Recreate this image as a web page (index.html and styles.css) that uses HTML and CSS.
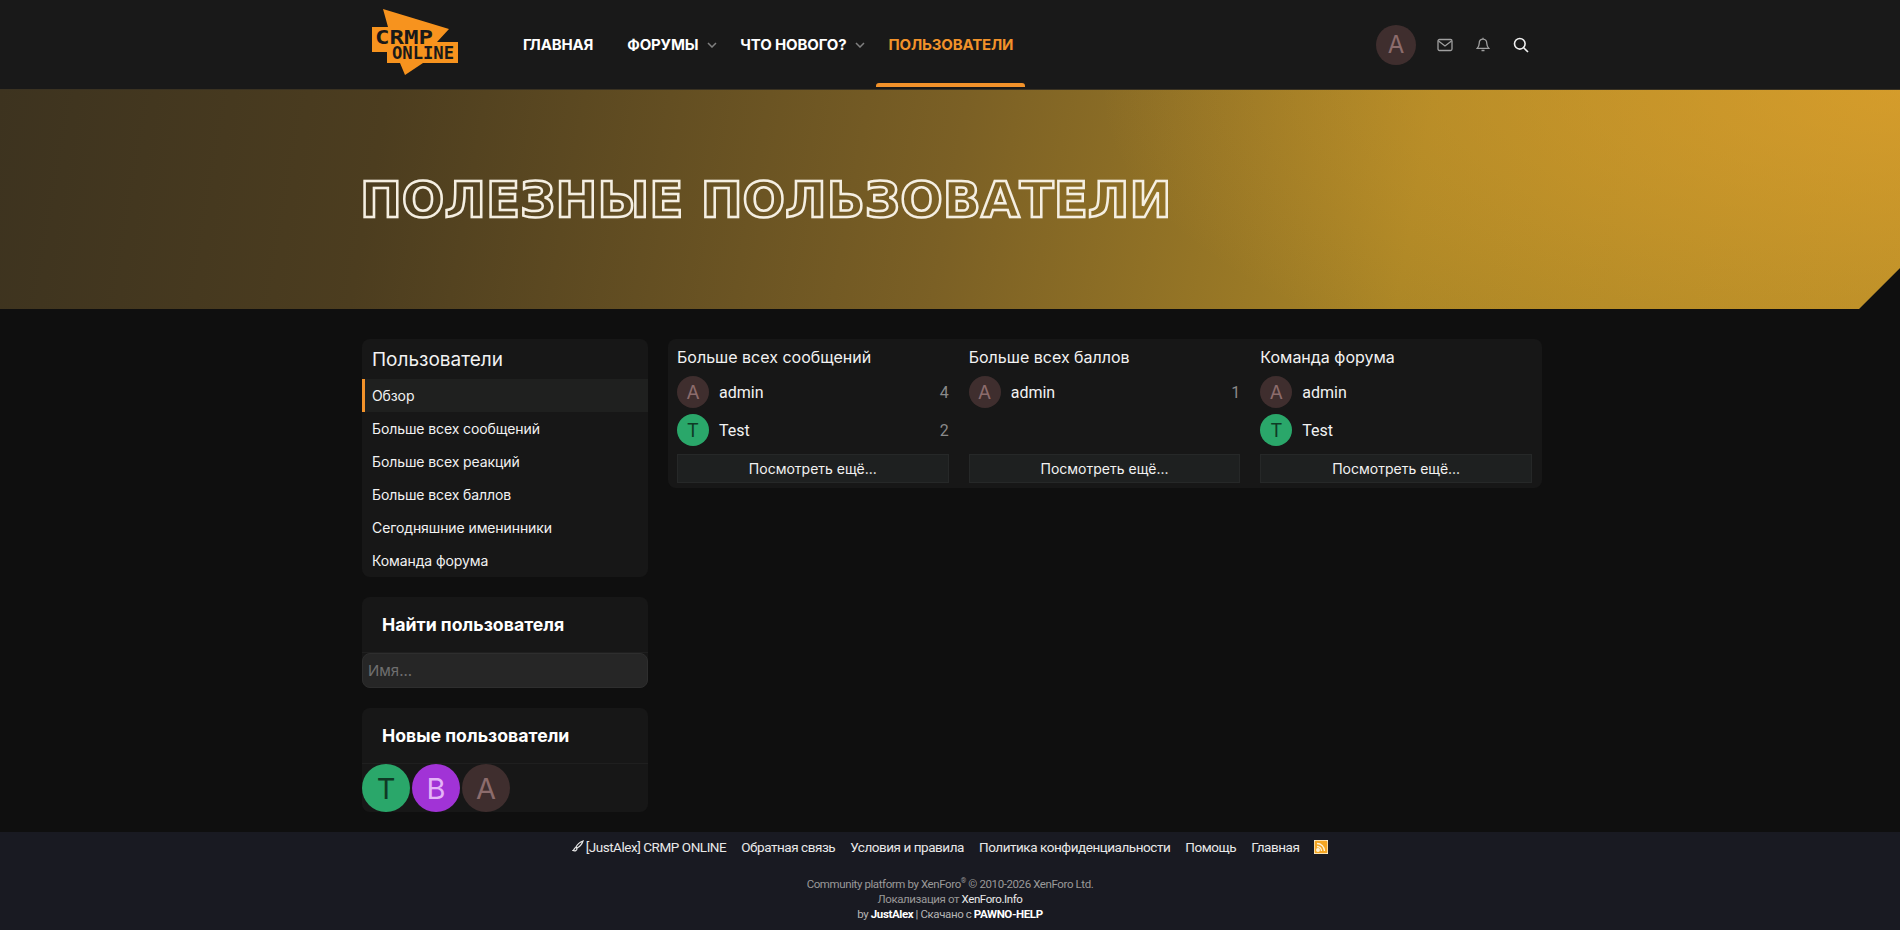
FILE: index.html
```html
<!DOCTYPE html>
<html lang="en">

<head>
    <title>Полезные пользователи</title>
    <link rel="stylesheet" href="styles.css">
</head>

<body>
    <header class="top-bar">
        <div class="wrap top-inner">
            <svg class="logo" viewBox="0 0 90 68" width="90" height="68">
                <polygon fill="#f7931e" points="13,1 79,21 67,34 88,34 88,55 53,55 35,67 30,55 17,55 17,44 2,44 2,19 18,19" />
                <text x="5" y="36" textLength="58" lengthAdjust="spacingAndGlyphs" class="logo-text logo-big">CRMP</text>
                <text x="22" y="51" textLength="62" lengthAdjust="spacingAndGlyphs" class="logo-text logo-small">ONLINE</text>
            </svg>
            <nav class="main-nav">
                <a class="nav-link">ГЛАВНАЯ</a>
                <a class="nav-link nav-drop">ФОРУМЫ<svg class="chev" viewBox="0 0 10 6" width="10" height="6"><path d="M1 1l4 4 4-4" /></svg></a>
                <a class="nav-link nav-drop">ЧТО НОВОГО?<svg class="chev" viewBox="0 0 10 6" width="10" height="6"><path d="M1 1l4 4 4-4" /></svg></a>
                <a class="nav-link nav-active">ПОЛЬЗОВАТЕЛИ</a>
            </nav>
            <div class="top-icons">
                <span class="avatar av-a av-40">A</span>
                <svg class="icon icon-mail" viewBox="0 0 16 14" width="16" height="14"><rect x="1" y="1.500" width="14" height="11" rx="1.500" /><path d="M1.500 3l6.500 5 6.500-5" /></svg>
                <svg class="icon" viewBox="0 0 14 16" width="14" height="16"><path d="M7 2.200c-2.600 0-3.800 2-3.800 4.200 0 2.600-1 3.800-2 5h11.600c-1-1.200-2-2.400-2-5 0-2.200-1.200-4.200-3.800-4.200zM7 .8v1.400M5.500 13.500h3" /></svg>
                <svg class="icon icon-search" viewBox="0 0 16 16" width="16" height="16"><circle cx="6.800" cy="6.800" r="5.300" /><path d="M10.700 10.700l4.300 4.300" /></svg>
            </div>
        </div>
    </header>

    <section class="hero">
        <div class="wrap">
            <h1 class="hero-title">ПОЛЕЗНЫЕ ПОЛЬЗОВАТЕЛИ</h1>
        </div>
    </section>

    <main class="wrap content">
        <aside class="sidebar">
            <div class="block">
                <div class="side-title">Пользователи</div>
                <a class="side-link side-active">Обзор</a>
                <a class="side-link">Больше всех сообщений</a>
                <a class="side-link">Больше всех реакций</a>
                <a class="side-link">Больше всех баллов</a>
                <a class="side-link">Сегодняшние именинники</a>
                <a class="side-link">Команда форума</a>
            </div>

            <div class="block">
                <div class="widget-title">Найти пользователя</div>
                <div class="name-input">Имя...</div>
            </div>

            <div class="block">
                <div class="widget-title">Новые пользователи</div>
                <div class="new-users">
                    <span class="avatar av-t av-48">T</span>
                    <span class="avatar av-b av-48">B</span>
                    <span class="avatar av-a av-48">A</span>
                </div>
            </div>
        </aside>

        <section class="block lists">
            <div class="list-col">
                <div class="list-title">Больше всех сообщений</div>
                <div class="user-row"><span class="avatar av-a av-32">A</span><span class="user-name">admin</span><span class="user-count">4</span></div>
                <div class="user-row"><span class="avatar av-t av-32">T</span><span class="user-name">Test</span><span class="user-count">2</span></div>
                <a class="more-btn">Посмотреть ещё...</a>
            </div>
            <div class="list-col">
                <div class="list-title">Больше всех баллов</div>
                <div class="user-row"><span class="avatar av-a av-32">A</span><span class="user-name">admin</span><span class="user-count">1</span></div>
                <div class="user-row"></div>
                <a class="more-btn">Посмотреть ещё...</a>
            </div>
            <div class="list-col">
                <div class="list-title">Команда форума</div>
                <div class="user-row"><span class="avatar av-a av-32">A</span><span class="user-name">admin</span></div>
                <div class="user-row"><span class="avatar av-t av-32">T</span><span class="user-name">Test</span></div>
                <a class="more-btn">Посмотреть ещё...</a>
            </div>
        </section>
    </main>

    <footer class="page-footer">
        <div class="foot-links">
            <a><svg class="brush" viewBox="0 0 12 12" width="12" height="12"><path d="M11 1C8 2 5 5 4 7l1 1c2-1 5-4 6-7zM3.500 7.500C2 8 2.500 10 1 10.500c2 1 4 0 4-2z" /></svg>[JustAlex] CRMP ONLINE</a>
            <a>Обратная связь</a>
            <a>Условия и правила</a>
            <a>Политика конфиденциальности</a>
            <a>Помощь</a>
            <a>Главная</a>
            <svg class="rss" viewBox="0 0 14 14" width="14" height="14">
                <rect width="14" height="14" rx="2" fill="#f5a623" />
                <circle cx="4" cy="10" r="1.300" fill="#fff3d6" />
                <path d="M3 6.500a4.500 4.500 0 0 1 4.500 4.500M3 3.500a7.500 7.500 0 0 1 7.500 7.500" />
            </svg>
        </div>
        <div class="foot-copy">
            <div>Community platform by XenForo<sup>®</sup> © 2010-2026 XenForo Ltd.</div>
            <div>Локализация от <b class="foot-lit">XenForo.Info</b></div>
            <div class="foot-by">by <b>JustAlex</b> | Скачано с <b>PAWNO-HELP</b></div>
        </div>
    </footer>
</body>

</html>
```

FILE: styles.css
```css
/* Page */
body {
    margin: 0;
    background-color: #0f0f0f;
    color: #f2f2f2;
    font-family: Inter, "Noto Sans", sans-serif;
    font-size: 15px;
}

.wrap {
    width: 1180px;
    margin-left: 362px;
}

/* Top bar */
.top-bar {
    height: 89px;
    background-color: #191919;
    border-bottom: 1px solid #3a3222;
}

.top-inner {
    display: flex;
    align-items: center;
    height: 89px;
    box-sizing: border-box;
    padding-left: 8px;
}

.logo {
    margin-bottom: 5px;
}

.logo-text {
    font-family: "DejaVu Sans Mono", monospace;
    font-weight: bold;
    fill: #191919;
}

.logo-big {
    font-size: 20px;
}

.logo-small {
    font-size: 17px;
}

.main-nav {
    display: flex;
    height: 89px;
    margin-left: 51px;
}

.nav-link {
    position: relative;
    display: flex;
    align-items: center;
    padding: 0 12px;
    margin-right: 10px;
    font-size: 15px;
    font-weight: 700;
    letter-spacing: -0.15px;
    color: #ffffff;
}

.nav-drop {
    margin-right: -1px;
}

.chev {
    margin-left: 9px;
    fill: none;
    stroke: #808080;
    stroke-width: 1.500;
}

.nav-active {
    color: #f2922a;
}

.nav-active::after {
    content: "";
    position: absolute;
    left: 0;
    right: 0;
    bottom: 2px;
    height: 4px;
    background-color: #f2922a;
    border-radius: 3px 3px 0 0;
}

.top-icons {
    display: flex;
    align-items: center;
    margin-left: auto;
    margin-right: 13px;
    gap: 23px;
}

.icon {
    fill: none;
    stroke: #a0a0a0;
    stroke-width: 1.300;
}

.icon-mail {
    margin-left: -2px;
}

.icon-search {
    stroke: #f0f0f0;
    stroke-width: 1.600;
}

/* Avatars */
.avatar {
    display: flex;
    align-items: center;
    justify-content: center;
    border-radius: 50%;
    flex-shrink: 0;
}

.av-a {
    background-color: #3f2e2e;
    color: #8c6c6c;
}

.av-t {
    background-color: #2aa76a;
    color: #0f3a25;
}

.av-b {
    background-color: #a133d6;
    color: #e4b4f7;
}

.av-32 {
    width: 32px;
    height: 32px;
    font-size: 19px;
}

.av-40 {
    width: 40px;
    height: 40px;
    font-size: 24px;
}

.av-48 {
    width: 48px;
    height: 48px;
    font-size: 29px;
}

/* Hero */
.hero {
    height: 219px;
    background:
        radial-gradient(ellipse 800px 330px at 100% 0, rgba(230, 165, 45, 0.65), rgba(230, 165, 45, 0)),
        linear-gradient(100deg, #3d331f 0%, #4c3d1f 20%, #7b6025 50%, #a98526 74%, #b58c28 100%);
    clip-path: polygon(0 0, 100% 0, 100% 178px, calc(100% - 41px) 100%, 0 100%);
    display: flex;
    align-items: center;
}

.hero-title {
    margin: 0 0 0 -2px;
    font-family: "DejaVu Sans", "Liberation Sans", sans-serif;
    font-size: 50px;
    font-weight: 700;
    color: transparent;
    -webkit-text-stroke: 2.500px #f5efe2;
}

/* Content */
.content {
    display: flex;
    gap: 20px;
    padding: 30px 0 20px;
    align-items: flex-start;
}

.sidebar {
    width: 286px;
    display: flex;
    flex-direction: column;
    gap: 20px;
}

.block {
    background-color: #171717;
    border-radius: 8px;
}

.side-title {
    height: 40px;
    line-height: 42px;
    padding-left: 10px;
    font-size: 19px;
}

.side-link {
    display: block;
    height: 33px;
    line-height: 33px;
    padding-left: 10px;
    font-size: 14px;
    letter-spacing: -0.1px;
}

.side-active {
    background-color: #1f201f;
    box-shadow: inset 3px 0 0 #f2922a;
}

.widget-title {
    height: 55px;
    line-height: 55px;
    padding-left: 20px;
    font-size: 17.700px;
    font-weight: 700;
    color: #ffffff;
    border-bottom: 1px solid #1f1f1f;
}

.name-input {
    height: 35px;
    line-height: 34px;
    padding-left: 5px;
    font-size: 15px;
    color: #6f6f6f;
    background-color: #262626;
    border: 1px solid #2e2e2e;
    border-radius: 8px;
    box-sizing: border-box;
}

.new-users {
    display: flex;
    gap: 2px;
}

.lists {
    flex: 1;
    display: flex;
    gap: 20px;
    padding: 0 10px 5px 9px;
}

.list-col {
    flex: 1;
}

.list-title {
    height: 34px;
    line-height: 36px;
    font-size: 16px;
}

.user-row {
    display: flex;
    align-items: center;
    height: 38px;
}

.user-name {
    margin-left: 10px;
    font-family: Roboto, sans-serif;
    font-size: 16px;
}

.user-count {
    margin-left: auto;
    font-family: Roboto, sans-serif;
    font-size: 16px;
    color: #8a8a8a;
}

.more-btn {
    display: block;
    height: 29px;
    line-height: 28px;
    margin-top: 5px;
    text-align: center;
    font-size: 14px;
    background-color: #1e2020;
    border: 1px solid #262828;
    box-sizing: border-box;
}

/* Footer */
.page-footer {
    background-color: #191a22;
    height: 99px;
    box-sizing: border-box;
    padding-top: 7px;
    font-family: Roboto, sans-serif;
}

.foot-links {
    display: flex;
    justify-content: center;
    align-items: center;
    gap: 15px;
    height: 16px;
    font-size: 13.500px;
    letter-spacing: -0.45px;
    color: #e8e8e8;
}

.brush {
    margin-right: 2px;
    fill: none;
    stroke: #e8e8e8;
    stroke-width: 1.200;
}

.rss {
    fill: none;
    stroke: #fff3d6;
    stroke-width: 1.300;
}

.foot-copy {
    margin-top: 22px;
    text-align: center;
    font-size: 11.500px;
    line-height: 15px;
    letter-spacing: -0.4px;
    color: #999999;
}

.foot-copy sup {
    font-size: 7px;
    line-height: 0;
}

.foot-lit {
    font-weight: 400;
    color: #e8e8e8;
}

.foot-by {
    color: #b5b5b5;
}

.foot-by b {
    color: #ffffff;
}
```
